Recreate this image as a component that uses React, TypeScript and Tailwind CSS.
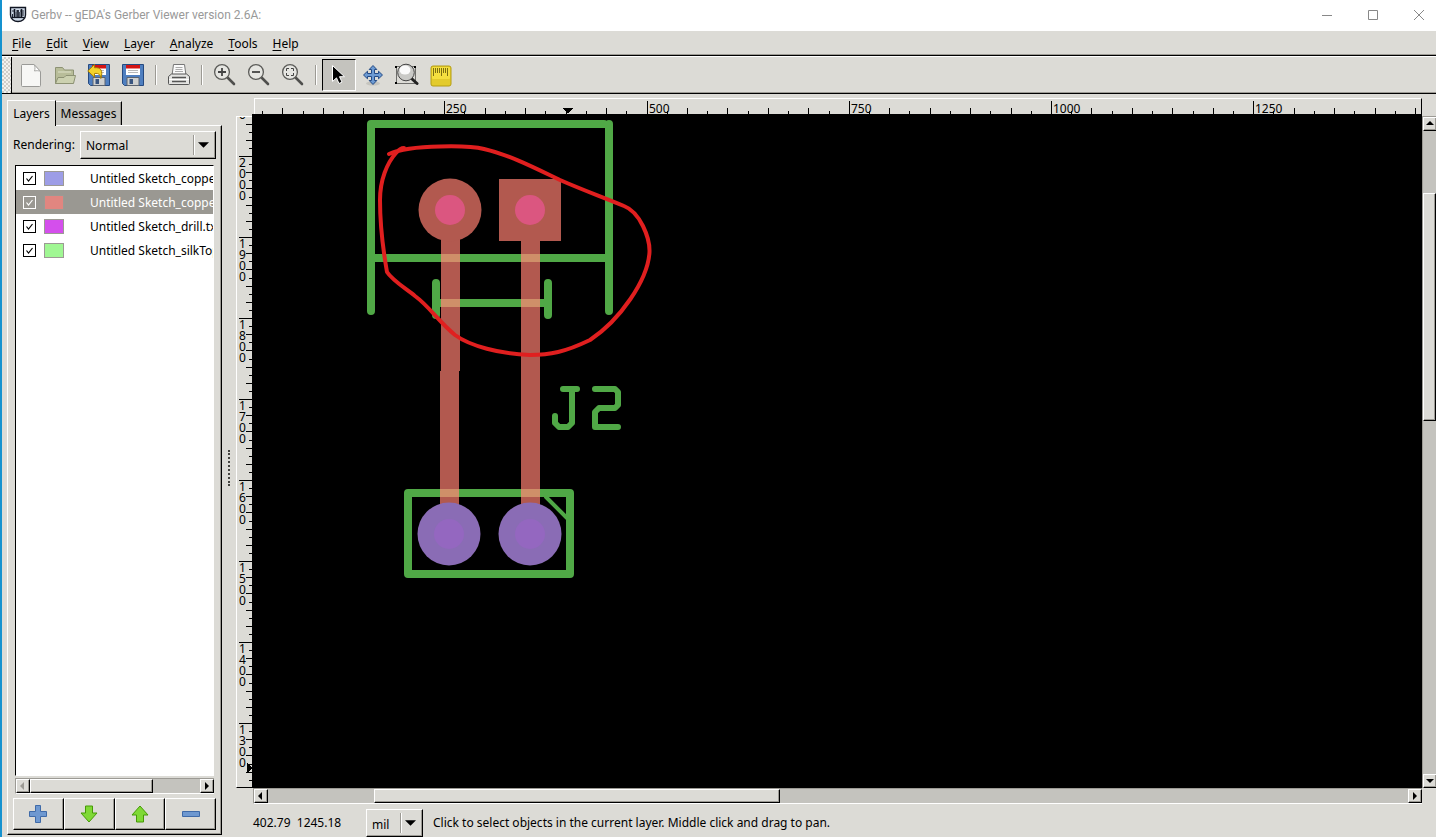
import { useState } from 'react';
import type { ReactNode } from 'react';
import clsx from 'clsx';

const raised =
  'bg-[#dcdbd6] border border-t-white border-l-white border-r-black border-b-black shadow-[inset_-1px_-1px_0_#9c9a94]';

const menus = ['File', 'Edit', 'View', 'Layer', 'Analyze', 'Tools', 'Help'];

const layers = [
  { name: 'Untitled Sketch_copperBottom', color: '#9d9de6' },
  { name: 'Untitled Sketch_copperTop', color: '#e18680' },
  { name: 'Untitled Sketch_drill.txt', color: '#d44fec' },
  { name: 'Untitled Sketch_silkTop', color: '#a0f793' },
];

function Logo() {
  return (
    <svg width="18" height="17" viewBox="0 0 18 17" fill="none" aria-hidden="true">
      <path d="M1.500 1.500h15V9c0 4-3.500 6.500-7.500 6.500S1.500 13 1.500 9z" fill="#cfdae8" stroke="#101522" strokeWidth="1.400" />
      <path d="M5.500 3v8M9 4v8M12.500 3v8" stroke="#101522" strokeWidth="1.600" />
      <path d="M3 5h2.500M7 5h2M11 5h1.500M14 4v6M3.500 8v3M7.200 6v5M10.800 6v5" stroke="#101522" strokeWidth=".9" />
      <path d="M3 11.500h12" stroke="#101522" strokeWidth="1.200" />
    </svg>
  );
}

function NewIcon() {
  return (
    <svg width="24" height="26" viewBox="0 0 24 26" aria-hidden="true">
      <path d="M3 2.500h12l6.500 7v14a1 1 0 0 1-1 1H3.500a1 1 0 0 1-1-1V3.500a1 1 0 0 1 1-1z" fill="#f7f7f5" stroke="#9a9a97" />
      <path d="M15 2.500c1.500 2 1 4.500.5 6.500 2-.5 4.500-.5 6 .5z" fill="#fff" stroke="#a9a9a6" />
    </svg>
  );
}

function OpenIcon() {
  return (
    <svg width="24" height="24" viewBox="0 0 24 24" aria-hidden="true">
      <path d="M2.500 20.500v-16h7l2 2.500h9v13z" fill="#b8bd99" stroke="#8d9274" />
      <path d="M5 9h13" stroke="#dfe2ca" />
      <path d="M2.500 20.500 5 14.500h6l2-2h9.500l-2 8z" fill="#ccd1b0" stroke="#8d9274" />
    </svg>
  );
}

function Floppy({ revert = false }: { revert?: boolean }) {
  return (
    <svg width="24" height="24" viewBox="0 0 24 24" aria-hidden="true">
      <path d="M1.500 1.500h21v21H3.500l-2-2z" fill="#4f7fc0" stroke="#264a80" />
      <path d="M5 2h14v10H5z" fill="#fff" />
      <path d="M5 2h14v3.500H5z" fill="#d41414" />
      <path d="M7 7.500h10M7 9.500h10" stroke="#b9b9b9" />
      <path d="M6 14.500h12v8H6z" fill="#cfd0cf" stroke="#5c6470" />
      <path d="M8.500 16h3.500v5H8.500z" fill="#39557f" />
      {revert && (
        <path d="M.8 8 7.500 1.500v3.300c6-.8 9 2.700 6.300 10.700 0-3.500-2-5.600-6.300-5v3.700z" fill="#f3d22b" stroke="#a77b05" />
      )}
    </svg>
  );
}

function PrintIcon() {
  return (
    <svg width="24" height="24" viewBox="0 0 24 24" aria-hidden="true">
      <path d="M5 12.500 6.500 1.500h11l1.500 11z" fill="#fafafa" stroke="#777" />
      <path d="M8.500 4.500h7M8.500 6.500h7M8 8.500h8" stroke="#aaa" />
      <path d="M1.500 13.500 4.500 11h15l3 2.500v7a1 1 0 0 1-1 1h-19a1 1 0 0 1-1-1z" fill="#e4e4e2" stroke="#555" />
      <path d="M5 14.500h14M5 18.500h14" stroke="#555" strokeWidth="1.500" />
      <path d="M2 16.500h20" stroke="#fff" />
    </svg>
  );
}

function ZoomIcon({ children }: { children: ReactNode }) {
  return (
    <svg width="24" height="24" viewBox="0 0 24 24" fill="none" aria-hidden="true">
      <path d="m14.500 14.500 6.500 6.500" stroke="#4f4f4d" strokeWidth="2.600" strokeLinecap="round" />
      <circle cx="9" cy="9" r="7.400" fill="#e6e6e2" stroke="#5c5c59" strokeWidth="1.300" />
      {children}
    </svg>
  );
}

function PointerIcon() {
  return (
    <svg width="24" height="24" viewBox="0 0 24 24" aria-hidden="true">
      <path d="M5.500 2.500v16l4-3.600 2.500 5.600 3-1.400-2.500-5.400h5z" fill="#000" stroke="#fff" />
    </svg>
  );
}

function MoveIcon() {
  return (
    <svg width="24" height="24" viewBox="0 0 24 24" aria-hidden="true">
      <ellipse cx="12" cy="20.500" rx="7" ry="2" fill="#c5c4be" />
      <path
        d="m12 2.500 3.800 4h-2.300v4h4v-2.300l4 3.800-4 3.800v-2.300h-4v4h2.300l-3.800 4-3.800-4h2.300v-4h-4v2.300l-4-3.800 4-3.800v2.300h4v-4H8.200z"
        fill="#6c9ad2"
        stroke="#244b86"
      />
    </svg>
  );
}

function RegionIcon() {
  return (
    <svg width="24" height="24" viewBox="0 0 24 24" fill="none" aria-hidden="true">
      <path d="M1.500 3.500h19v17h-19z" stroke="#000" strokeDasharray="1 1" />
      <path d="M0 3h2v2H0zM19 3h2v2h-2zM0 19h2v2H0z" fill="#000" />
      <path d="m16.500 15.500 5.500 5" stroke="#222" strokeWidth="3" strokeLinecap="round" />
      <circle cx="11" cy="9.500" r="8.300" fill="#c9c9c6" stroke="#444" />
      <ellipse cx="10" cy="7" rx="5.500" ry="4.500" fill="#fafafa" />
    </svg>
  );
}

function MeasureIcon() {
  return (
    <svg width="24" height="24" viewBox="0 0 24 24" aria-hidden="true">
      <rect x="2" y="3" width="20" height="20" rx="2" fill="#e3cb2c" stroke="#b59e12" />
      <rect x="3" y="4" width="18" height="12" rx="1" fill="#f4df3f" />
      <path d="M4.500 5v8M6.500 5v5M8.500 5v5M10.500 5v5M12.500 5v8M14.500 5v5M16.500 5v5M18.500 5v8" stroke="#5e5206" strokeWidth=".8" />
    </svg>
  );
}

const tools = [
  { label: 'New', icon: <NewIcon /> },
  { label: 'Open', icon: <OpenIcon /> },
  { label: 'Revert', icon: <Floppy revert /> },
  { label: 'Save', icon: <Floppy /> },
  null,
  { label: 'Print', icon: <PrintIcon /> },
  null,
  { label: 'Zoom in', icon: <ZoomIcon><path d="M5 9h8M9 5v8" stroke="#444" strokeWidth="1.800" /></ZoomIcon> },
  { label: 'Zoom out', icon: <ZoomIcon><path d="M5 9h8" stroke="#444" strokeWidth="1.800" /></ZoomIcon> },
  {
    label: 'Zoom to fit',
    icon: (
      <ZoomIcon>
        <path d="M5.500 8V5.500H8M10 5.500h2.500V8M12.500 10v2.500H10M8 12.500H5.500V10" stroke="#444" />
      </ZoomIcon>
    ),
  },
  null,
  { label: 'Pointer', icon: <PointerIcon />, active: true },
  { label: 'Pan', icon: <MoveIcon /> },
  { label: 'Zoom region', icon: <RegionIcon /> },
  { label: 'Measure', icon: <MeasureIcon /> },
];

const arrows = {
  up: 'M0 5 4 1l4 4z',
  down: 'M0 2h8L4 6z',
  left: 'M5 0v8L1 4z',
  right: 'M2 0v8l4-4z',
};

function ArrowButton({ dir, dim = false }: { dir: keyof typeof arrows; dim?: boolean }) {
  return (
    <button aria-label={`Scroll ${dir}`} className={clsx('flex h-[14px] w-[14px] shrink-0 items-center justify-center', raised)}>
      <svg width="8" height="8" viewBox="0 0 8 8" aria-hidden="true">
        <path d={arrows[dir]} fill={dim ? '#9c9a94' : '#000'} />
      </svg>
    </button>
  );
}

interface ScrollbarProps {
  vertical?: boolean;
  parts: [number, number, number];
  dimStart?: boolean;
}

function Scrollbar({ vertical = false, parts, dimStart }: ScrollbarProps) {
  return (
    <div
      className={clsx(
        'flex bg-[#c4c3be] border-[#9c9a94]',
        vertical ? 'w-[14px] flex-col border-t border-l' : 'h-4 border-t border-b border-l border-b-white',
      )}
    >
      <ArrowButton dir={vertical ? 'up' : 'left'} dim={dimStart} />
      <div style={{ flexGrow: parts[0] }} />
      <div style={{ flexGrow: parts[1] }} className={raised} />
      <div style={{ flexGrow: parts[2] }} />
      <ArrowButton dir={vertical ? 'down' : 'right'} />
    </div>
  );
}

function Combo({ label, options, className }: { label: string; options: string[]; className: string }) {
  return (
    <div className={clsx('relative h-7', raised, className)}>
      <select aria-label={label} className="h-full w-full appearance-none bg-transparent pt-px pl-[5px] outline-none">
        {options.map((o) => (
          <option key={o}>{o}</option>
        ))}
      </select>
      <span className="pointer-events-none absolute inset-y-[3px] right-[6px] flex w-4 items-center justify-end border-l border-[#9c9a94] shadow-[inset_1px_0_0_#fff]">
        <svg width="11" height="6" viewBox="0 0 12 6" aria-hidden="true">
          <path d="M0 0h12L6 6z" />
        </svg>
      </span>
    </div>
  );
}

// 250 mil take 202.3 px, the origin is left of the ruler
function HorizontalRuler() {
  const ticks = Array.from({ length: 58 }, (_, i) => (i + 1) * 25);
  return (
    <div className="h-4 flex-1 overflow-hidden border-t border-r border-l border-t-white border-r-black border-l-white">
      <svg className="block h-full w-full" shapeRendering="crispEdges">
        {ticks.map((mil) => {
          const x = Math.round(mil * 0.809 - 13);
          const major = mil % 250 === 0;
          const len = major ? 13 : mil % 50 === 0 ? 6 : 3;
          return (
            <g key={mil}>
              <path d={`M${x + 0.5} ${15 - len}V15`} stroke="#000" />
              {major && (
                <text x={x + 2} y="14" fontSize="12">
                  {mil}
                </text>
              )}
            </g>
          );
        })}
        <path d="M308 9h10l-5 6z" />
      </svg>
    </div>
  );
}

function VerticalRuler() {
  const ticks = Array.from({ length: 88 }, (_, i) => 2100 - i * 10);
  return (
    <div className="w-4 overflow-hidden border-t border-b border-l border-t-white border-b-black border-l-white">
      <svg className="block h-full w-full" shapeRendering="crispEdges">
        {ticks.map((mil) => {
          const y = Math.round((2000 - mil) * 0.81 + 39);
          const major = mil % 100 === 0;
          const len = major ? 13 : mil % 20 === 0 ? 6 : 3;
          return (
            <g key={mil}>
              <path d={`M${15 - len} ${y + 0.5}H15`} stroke="#000" />
              {major && (
                <text y={y} fontSize="12">
                  {String(mil)
                    .split('')
                    .map((digit, i) => (
                      <tspan key={i} x="2" dy="11">
                        {digit}
                      </tspan>
                    ))}
                </text>
              )}
            </g>
          );
        })}
        <path d="M10 646v10l6-5z" />
      </svg>
    </div>
  );
}

function Board() {
  return (
    <svg className="block h-full w-full" fill="none" role="img" aria-label="Board layers">
      <g transform="translate(-252 -114)">
        <g stroke="#50a846" strokeWidth="8" strokeLinecap="round" strokeLinejoin="round">
          <path d="M371 311V124h233M609 124v187M371 258h238" />
          <path d="M436 283v32M548 283v32M436 303h112" />
          <path d="M408 493h162v81H408z" />
          <path d="m546 497 21 21" strokeWidth="4" />
          <path d="M563 389h14M572 389v34l-4 4h-9l-4-4v-7" strokeWidth="6" />
          <path d="M595 389h20l3 3v13l-3 3h-16l-4 4v15h23" strokeWidth="6" />
        </g>
        <g fill="#b2594f">
          <path d="M441 235h19v136h-1v135h-19V371h1zM521 235h19v271h-19z" />
          <circle cx="450" cy="210" r="31.500" />
          <path d="M499 179h62v62h-62z" />
        </g>
        <path
          d="M441 254h19v8h-19zM521 254h19v8h-19zM441 299h19v8h-19zM521 299h19v8h-19zM440 489h19v8h-19zM521 489h19v8h-19z"
          fill="#cf8f69"
        />
        <g fill="#db5680">
          <circle cx="450" cy="210" r="15" />
          <circle cx="530" cy="210" r="15" />
        </g>
        <g fill="#8a6cb5">
          <circle cx="449" cy="534" r="31.500" />
          <circle cx="530" cy="534" r="31.500" />
        </g>
        <g fill="#9467c0">
          <circle cx="449" cy="534" r="15" />
          <circle cx="530" cy="534" r="15" />
        </g>
        <path
          d="M389 154C400 149 415 147 440 146.500C460 146 472 146 484 149C510 155 535 168 560 180C585 191 600 196 624 206C640 212 650 238 649.500 252C648 280 620 320 590 340C565 352 550 355 530 355C500 354 470 346 455 335C437 320 430 307 415 296C405 288 392 280 387 272C384 255 380 225 380 200C380 180 387 163 396 153C400 148 403 148 404 148"
          stroke="#e01f1f"
          strokeWidth="4"
          strokeLinecap="round"
          strokeLinejoin="round"
        />
      </g>
    </svg>
  );
}

function LayerPanel() {
  const [selected, setSelected] = useState(1);

  return (
    <aside className="flex w-[215px] shrink-0 flex-col pt-[6px] pb-[2px]">
      <div className="flex items-end" role="tablist">
        <button role="tab" aria-selected="true" className="relative -mb-px h-[26px] w-[49px] border-t border-r border-l border-t-white border-r-black border-l-white bg-[#dcdbd6]">
          Layers
        </button>
        <button role="tab" aria-selected="false" className="h-6 w-[66px] border-t border-r border-t-white border-r-black bg-[#c4c3be] shadow-[inset_-1px_0_0_#9c9a94]">
          Messages
        </button>
      </div>
      <div className={clsx('flex min-h-0 flex-1 flex-col px-[5px] pt-[5px] pb-1', raised)}>
        <div className="flex items-center justify-between">
          <span>Rendering:</span>
          <Combo label="Rendering" options={['Normal', 'Fast', 'High quality']} className="w-[136px]" />
        </div>
        <div className="mx-[2px] mt-[6px] flex min-h-0 flex-1 flex-col">
          <ul className="min-h-0 flex-1 overflow-hidden border-t border-r border-b border-l border-t-black border-r-white border-b-white border-l-black bg-white">
            {layers.map((layer, i) => (
              <li
                key={layer.name}
                onClick={() => setSelected(i)}
                className={clsx('flex h-6 items-center pl-[7px]', i === selected && 'bg-[#9a9892] text-white')}
              >
                <span className="relative h-[13px] w-[13px] shrink-0">
                  <input
                    type="checkbox"
                    defaultChecked
                    aria-label={layer.name}
                    className="peer block h-[13px] w-[13px] appearance-none border border-current"
                  />
                  <svg className="pointer-events-none absolute inset-0 hidden peer-checked:block" viewBox="0 0 13 13" fill="none" aria-hidden="true">
                    <path d="m3.500 6.500 2 2.500L9.500 4" stroke="currentColor" strokeWidth="1.200" />
                  </svg>
                </span>
                <span style={{ backgroundColor: layer.color }} className="ml-2 h-[15px] w-5 shrink-0 border border-[#9c9a94]" />
                <span className="ml-[26px] pt-px whitespace-nowrap">{layer.name}</span>
              </li>
            ))}
          </ul>
          <div className="mt-[2px]">
            <Scrollbar parts={[0, 122, 47]} dimStart />
          </div>
        </div>
        <div className="mt-1 grid grid-cols-4">
          <button aria-label="Add layer" className={clsx('flex h-8 items-center justify-center', raised)}>
            <svg width="20" height="20" viewBox="0 0 20 20" aria-hidden="true">
              <path d="M7.500 1.500h5v6h6v5h-6v6h-5v-6h-6v-5h6z" fill="#6e98d0" stroke="#3f6aa8" />
            </svg>
          </button>
          <button aria-label="Move layer down" className={clsx('flex h-8 items-center justify-center', raised)}>
            <svg width="18" height="18" viewBox="0 0 18 18" aria-hidden="true">
              <path d="M5.500 1h7v7H17l-8 9-8-9h4.500z" fill="#7fd936" stroke="#469a06" />
            </svg>
          </button>
          <button aria-label="Move layer up" className={clsx('flex h-8 items-center justify-center', raised)}>
            <svg width="18" height="18" viewBox="0 0 18 18" aria-hidden="true">
              <path d="M5.500 17h7v-7H17L9 1 1 10h4.500z" fill="#7fd936" stroke="#469a06" />
            </svg>
          </button>
          <button aria-label="Remove layer" className={clsx('flex h-8 items-center justify-center', raised)}>
            <svg width="18" height="6" viewBox="0 0 18 6" aria-hidden="true">
              <path d="M.5.500h17v5H.5z" fill="#6e98d0" stroke="#3f6aa8" />
            </svg>
          </button>
        </div>
      </div>
    </aside>
  );
}

export default function App() {
  return (
    <div className="flex h-screen overflow-hidden bg-[#dcdbd6] font-['Noto_Sans',sans-serif] text-[12px] leading-4 text-black">
      {/* desktop showing at the left edge */}
      <div className="w-[2px] shrink-0 bg-[#1592cf]" />

      <div className="flex min-w-0 flex-1 flex-col">
        <header className="flex h-[31px] shrink-0 items-center bg-white pb-[2px] pl-[7px] font-['Roboto',sans-serif] text-[#999]">
          <Logo />
          <h1 className="ml-1 flex-1">Gerbv -- gEDA's Gerber Viewer version 2.6A:</h1>
          <button aria-label="Minimize" className="flex w-[46px] justify-center">
            <svg width="10" height="10" stroke="#888"><path d="M0 5.500h10" /></svg>
          </button>
          <button aria-label="Maximize" className="flex w-[46px] justify-center">
            <svg width="10" height="10" fill="none" stroke="#888"><path d="M.5.500h9v9h-9z" /></svg>
          </button>
          <button aria-label="Close" className="flex w-10 justify-end pr-3">
            <svg width="10" height="10" stroke="#888"><path d="m0 0 10 10M10 0 0 10" /></svg>
          </button>
        </header>

        <nav className="flex h-[25px] shrink-0 items-center border-b border-black pt-px pl-[3px] shadow-[inset_0_-1px_0_#9c9a94]">
          {menus.map((menu) => (
            <button key={menu} className="pr-2 pl-[7px]">
              <span className="underline underline-offset-2">{menu[0]}</span>
              {menu.slice(1)}
            </button>
          ))}
        </nav>

        <div className="flex h-[38px] shrink-0 border-t border-b border-t-white border-b-black shadow-[inset_0_-1px_0_#9c9a94]">
          <div className="mr-[2px] w-[10px] border-r border-black bg-[repeating-conic-gradient(#cfcec9_0_25%,#f2f1ee_0_50%)] bg-[length:4px_4px]" />
          {tools.map((tool, i) =>
            tool ? (
              <button
                key={tool.label}
                aria-label={tool.label}
                className={clsx(
                  'my-[2px] flex w-[34px] items-center justify-center',
                  tool.active && 'border border-t-black border-r-white border-b-white border-l-black bg-[#c4c3be]',
                )}
              >
                {tool.icon}
              </button>
            ) : (
              <div key={i} className="flex w-3 items-center justify-center">
                <div className="h-5 w-[2px] border-r border-l border-r-white border-l-[#9c9a94]" />
              </div>
            ),
          )}
        </div>

        <div className="flex min-h-0 flex-1 pl-[5px]">
          <LayerPanel />
          <div className="flex w-[14px] shrink-0 items-center justify-center pt-1">
            <div className="h-9 border-l-2 border-dotted border-[#44433f]" />
          </div>

          <main className="flex min-w-0 flex-1 flex-col pt-1">
            <div className="flex pr-[14px] pl-[18px]">
              <HorizontalRuler />
            </div>
            <div className="flex min-h-0 flex-1">
              <div className="flex pt-[2px]">
                <VerticalRuler />
              </div>
              <div className="min-w-0 flex-1 overflow-hidden bg-black">
                <Board />
              </div>
              <div className="flex pt-[2px]">
                <Scrollbar vertical parts={[62, 226, 353]} />
              </div>
            </div>
            <div className="pr-[14px] pl-[17px]">
              <Scrollbar parts={[106, 404, 628]} />
            </div>
            <footer className="flex h-[33px] items-end pl-[17px] leading-7">
              <output className="w-[113px] whitespace-pre">402.79  1245.18</output>
              <Combo label="Units" options={['mil', 'mm', 'in']} className="w-[57px]" />
              <span className="ml-[10px]">Click to select objects in the current layer. Middle click and drag to pan.</span>
            </footer>
          </main>
        </div>
      </div>
    </div>
  );
}
